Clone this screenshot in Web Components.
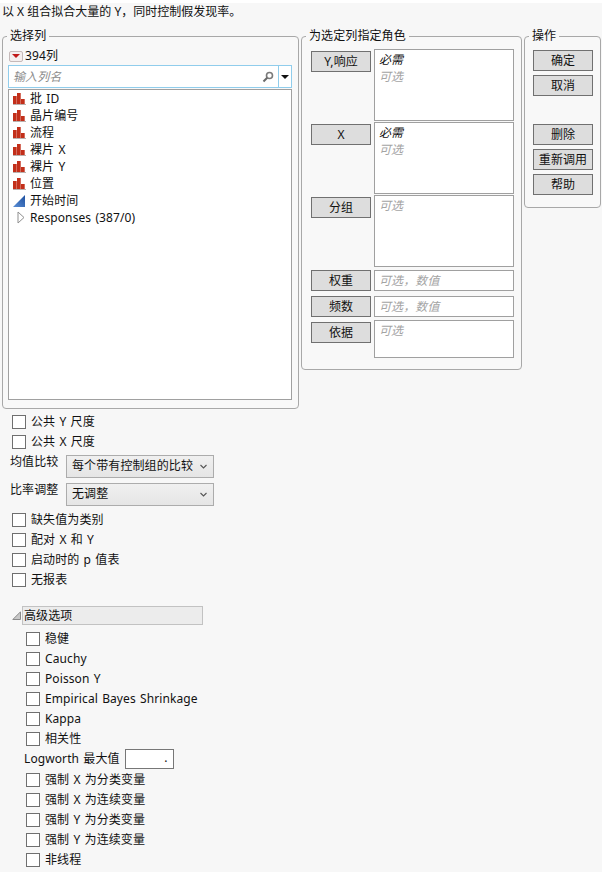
<!DOCTYPE html>
<html lang="zh">
<head>
<meta charset="utf-8">
<title>筛选预测</title>
<style>
  html, body { margin: 0; background: #f7f7f7; }
  body { font: 12px/16px "Noto Sans", "Noto Sans CJK SC", sans-serif; letter-spacing: .1px; word-spacing: 1px; color: #111; width: 602px; height: 872px; overflow: hidden; }
</style>
</head>
<body>
<x-dialog></x-dialog>

<script>
const boxStyle = `
  * { box-sizing: border-box; }
`;

class XPanel extends HTMLElement {
  constructor() {
    super();
    const root = this.attachShadow({ mode: 'open' });
    root.innerHTML = `
      <style>
        ${boxStyle}
        :host { display: block; }
        fieldset { margin: 0; height: 100%; min-width: 0; border: 1px solid #a8a8a8; border-radius: 4px; padding: 0; background: #f8f8f8; }
        legend { margin-left: 4px; padding: 0 3px; font-size: 12px; line-height: 16px; }
      </style>
      <fieldset><legend>${this.getAttribute('label')}</legend><slot></slot></fieldset>
    `;
  }
}

class XButton extends HTMLElement {
  constructor() {
    super();
    const root = this.attachShadow({ mode: 'open' });
    root.innerHTML = `
      <style>
        :host { display: flex; align-items: center; justify-content: center; box-sizing: border-box; width: 60px; height: 21px; border: 1px solid #707070; background: #dddddd; flex: none; }
      </style>
      <slot></slot>
    `;
  }
}

class XCheck extends HTMLElement {
  constructor() {
    super();
    const root = this.attachShadow({ mode: 'open' });
    root.innerHTML = `
      <style>
        :host { display: flex; align-items: center; height: 20px; gap: 5px; white-space: nowrap; }
        i { width: 14px; height: 14px; box-sizing: border-box; border: 1px solid #6f6f6f; background: #fff; flex: none; }
      </style>
      <i></i><span><slot></slot></span>
    `;
  }
}

class XSelect extends HTMLElement {
  constructor() {
    super();
    const root = this.attachShadow({ mode: 'open' });
    root.innerHTML = `
      <style>
        ${boxStyle}
        :host { display: flex; align-items: center; justify-content: space-between; box-sizing: border-box; width: 148px; height: 23px; padding: 0 6px 0 5px; border: 1px solid #acacac; background: linear-gradient(#f0f0f0, #e5e5e5); flex: none; }
        svg { width: 7px; height: 5px; }
      </style>
      <span><slot></slot></span>
      <svg viewBox="0 0 7 5"><path d="M.5 1 3.5 4 6.5 1" fill="none" stroke="#555" stroke-width="1.1"/></svg>
    `;
  }
}

class XRole extends HTMLElement {
  constructor() {
    super();
    const root = this.attachShadow({ mode: 'open' });
    const hints = (this.getAttribute('hints') || '').split('|');
    root.innerHTML = `
      <style>
        ${boxStyle}
        :host { display: flex; gap: 3px; align-items: flex-start; }
        .btn { margin-top: var(--btn-top, 2px); }
        .box { width: 140px; height: var(--h, 72px); border: 1px solid #a0a0a0; background: #fff; padding: 1px 4px; font-style: italic; line-height: 17px; }
        .req { color: #111; }
        .opt { color: #a4a4a4; }
      </style>
      <x-button class="btn"><slot></slot></x-button>
      <div class="box">${hints.map(h => `<div class="${h === '必需' ? 'req' : 'opt'}">${h}</div>`).join('')}</div>
    `;
  }
}

class XColumnIcon extends HTMLElement {
  constructor() {
    super();
    const root = this.attachShadow({ mode: 'open' });
    const bars = `
      <rect x="0" y="11" width="13" height="1" fill="#b9b0ae"/>
      <rect x="0" y="3" width="3.7" height="8" fill="#c22f1a"/>
      <rect x="4" y="0" width="3.7" height="11" fill="#c22f1a"/>
      <rect x="8" y="6" width="3.7" height="5" fill="#c22f1a"/>`;
    const wedge = `
      <defs><linearGradient id="g" x1="0" y1="1" x2="1" y2="0"><stop offset="0" stop-color="#5b8fd6"/><stop offset="1" stop-color="#1d4f9e"/></linearGradient></defs>
      <path d="M0 12 12 0V12Z" fill="url(#g)"/>`;
    root.innerHTML = `
      <style>
        :host { display: inline-flex; width: 13px; height: 12px; flex: none; }
        svg { width: 13px; height: 12px; display: block; }
      </style>
      <svg viewBox="0 0 13 12">${this.getAttribute('type') === 'wedge' ? wedge : bars}</svg>
    `;
  }
}

class XColumnList extends HTMLElement {
  constructor() {
    super();
    const root = this.attachShadow({ mode: 'open' });
    root.innerHTML = `
      <style>
        ${boxStyle}
        :host { display: block; box-sizing: border-box; height: 311px; margin: 1px 6px 0 5px; border: 1px solid #a0a0a0; background: #fff; }
        ::slotted(div) { display: flex; align-items: center; gap: 4px; height: 17px; padding-left: 4px; white-space: nowrap; }
      </style>
      <slot></slot>
    `;
  }
}

class XColumnPicker extends HTMLElement {
  constructor() {
    super();
    const root = this.attachShadow({ mode: 'open' });
    root.innerHTML = `
      <style>
        ${boxStyle}
        :host { display: block; height: 360px; }
        .count { display: flex; align-items: center; gap: 2px; height: 16px; margin: 4px 0 1px 6px; }
        .menu { width: 14px; height: 11px; border: 1px solid #c5b9b9; border-radius: 2px; background: #f4eeee; display: flex; align-items: center; justify-content: center; }
        .menu svg { width: 8px; height: 4px; display: block; }
        .search { display: flex; height: 23px; margin: 0 6px 0 5px; border: 1px solid #90cdec; background: #fff; }
        .search .field { flex: 1; display: flex; align-items: center; justify-content: space-between; padding: 0 5px 0 4px; color: #8c8c8c; font-style: italic; }
        .search .field svg { width: 12px; height: 12px; margin-right: -1px; }
        .search .drop { width: 13px; border-left: 1px solid #90cdec; display: flex; align-items: center; justify-content: center; }
        .search .drop svg { width: 8px; height: 4px; }
      </style>
      <div class="count">
        <span class="menu"><svg viewBox="0 0 8 4"><path d="M0 0H8L4 4Z" fill="#c01818"/></svg></span>
        <span>394列</span>
      </div>
      <div class="search">
        <div class="field"><span>输入列名</span>
          <svg viewBox="0 0 12 12"><circle cx="7.5" cy="4.5" r="3" fill="none" stroke="#7a7a7a" stroke-width="1.6"/><path d="M5.2 6.8 1.5 10.5" stroke="#6a6a6a" stroke-width="2"/></svg>
        </div>
        <div class="drop"><svg viewBox="0 0 8 4"><path d="M0 0H8L4 4Z" fill="#111"/></svg></div>
      </div>
      <x-column-list><slot></slot></x-column-list>
    `;
  }
}

class XOutline extends HTMLElement {
  constructor() {
    super();
    const root = this.attachShadow({ mode: 'open' });
    root.innerHTML = `
      <style>
        ${boxStyle}
        :host { display: flex; align-items: center; gap: 1px; margin-left: 12px; }
        svg { width: 9px; height: 9px; flex: none; }
        .title { width: 181px; height: 19px; border: 1px solid #c2c2c2; background: #ececec; padding-left: 1px; line-height: 17px; }
      </style>
      <svg viewBox="0 0 9 9"><path d="M8.5.8V8.5H.8Z" fill="#c8c8c8" stroke="#8a8a8a"/></svg>
      <div class="title"><slot></slot></div>
    `;
  }
}

class XDialog extends HTMLElement {
  constructor() {
    super();
    const root = this.attachShadow({ mode: 'open' });
    const col = (name) => `<div><x-column-icon></x-column-icon><span>${name}</span></div>`;
    root.innerHTML = `
      <style>
        ${boxStyle}
        :host { display: block; }
        .desc { background: #fff; height: 3px; }
        .intro { height: 25px; padding: 1px 0 0 2px; line-height: 16px; letter-spacing: 0; word-spacing: 0; }
        .top { display: flex; align-items: flex-start; margin-left: 2px; gap: 2px; }
        .roles { display: flex; flex-direction: column; gap: 1px; padding: 5px 7px 0 9px; }
        .actions { display: flex; flex-direction: column; gap: 4px; padding: 6px 0 0 8px; }
        .spacer { height: 20px; }
        .options { padding: 3px 0 0 12px; }
        .line { display: flex; align-items: center; height: 28px; margin-left: -2px; }
        .line label { width: 56px; flex: none; margin-top: -9px; }
        .line.last { margin-bottom: 2px; }
        .adv { margin-top: 16px; }
        .adv-items { padding: 4px 0 0 26px; }
        .logworth { display: flex; align-items: center; gap: 5px; height: 20px; margin: 0 0 1px -2px; }
        .logworth span.num { width: 49px; height: 20px; border: 1px solid #777; background: #fff; text-align: right; padding-right: 5px; line-height: 16px; }
      </style>
      <div class="desc"></div>
      <div class="intro">以 X 组合拟合大量的 Y，同时控制假发现率。</div>
      <div class="top">
        <x-panel label="选择列" style="width:297px;height:381px">
          <x-column-picker>
            ${['批 ID', '晶片编号', '流程', '裸片 X', '裸片 Y', '位置'].map(col).join('')}
            <div><x-column-icon type="wedge"></x-column-icon><span>开始时间</span></div>
            <div style="gap:5px;padding-left:8px"><svg viewBox="0 0 8 13" width="8" height="13"><path d="M1 1 7 6.5 1 12Z" fill="#fff" stroke="#8f8f8f"/></svg><span>Responses (387/0)</span></div>
          </x-column-picker>
        </x-panel>
        <x-panel label="为选定列指定角色" style="width:221px;height:342px">
          <div class="roles">
            <x-role hints="必需|可选" style="--h:72px">Y,响应</x-role>
            <x-role hints="必需|可选" style="--h:72px">X</x-role>
            <x-role hints="可选" style="--h:72px">分组</x-role>
            <x-role hints="可选，数值" style="--h:21px;--btn-top:0;margin-top:2px">权重</x-role>
            <x-role hints="可选，数值" style="--h:21px;--btn-top:0;margin-top:4px">频数</x-role>
            <x-role hints="可选" style="--h:38px;margin-top:2px">依据</x-role>
          </div>
        </x-panel>
        <x-panel label="操作" style="width:77px;height:180px">
          <div class="actions">
            <x-button>确定</x-button>
            <x-button>取消</x-button>
            <div class="spacer"></div>
            <x-button>删除</x-button>
            <x-button>重新调用</x-button>
            <x-button>帮助</x-button>
          </div>
        </x-panel>
      </div>
      <div class="options">
        <x-check>公共 Y 尺度</x-check>
        <x-check>公共 X 尺度</x-check>
        <div class="line"><label>均值比较</label><x-select>每个带有控制组的比较</x-select></div>
        <div class="line last"><label>比率调整</label><x-select>无调整</x-select></div>
        <x-check>缺失值为类别</x-check>
        <x-check>配对 X 和 Y</x-check>
        <x-check>启动时的 p 值表</x-check>
        <x-check>无报表</x-check>
      </div>
      <x-outline class="adv">高级选项</x-outline>
      <div class="adv-items">
        <x-check>稳健</x-check>
        <x-check>Cauchy</x-check>
        <x-check>Poisson Y</x-check>
        <x-check>Empirical Bayes Shrinkage</x-check>
        <x-check>Kappa</x-check>
        <x-check>相关性</x-check>
        <div class="logworth"><span>Logworth 最大值</span><span class="num">.</span></div>
        <x-check>强制 X 为分类变量</x-check>
        <x-check>强制 X 为连续变量</x-check>
        <x-check>强制 Y 为分类变量</x-check>
        <x-check>强制 Y 为连续变量</x-check>
        <x-check>非线程</x-check>
      </div>
    `;
  }
}

customElements.define('x-panel', XPanel);
customElements.define('x-button', XButton);
customElements.define('x-check', XCheck);
customElements.define('x-select', XSelect);
customElements.define('x-role', XRole);
customElements.define('x-column-icon', XColumnIcon);
customElements.define('x-column-list', XColumnList);
customElements.define('x-column-picker', XColumnPicker);
customElements.define('x-outline', XOutline);
customElements.define('x-dialog', XDialog);
</script>
</body>
</html>
